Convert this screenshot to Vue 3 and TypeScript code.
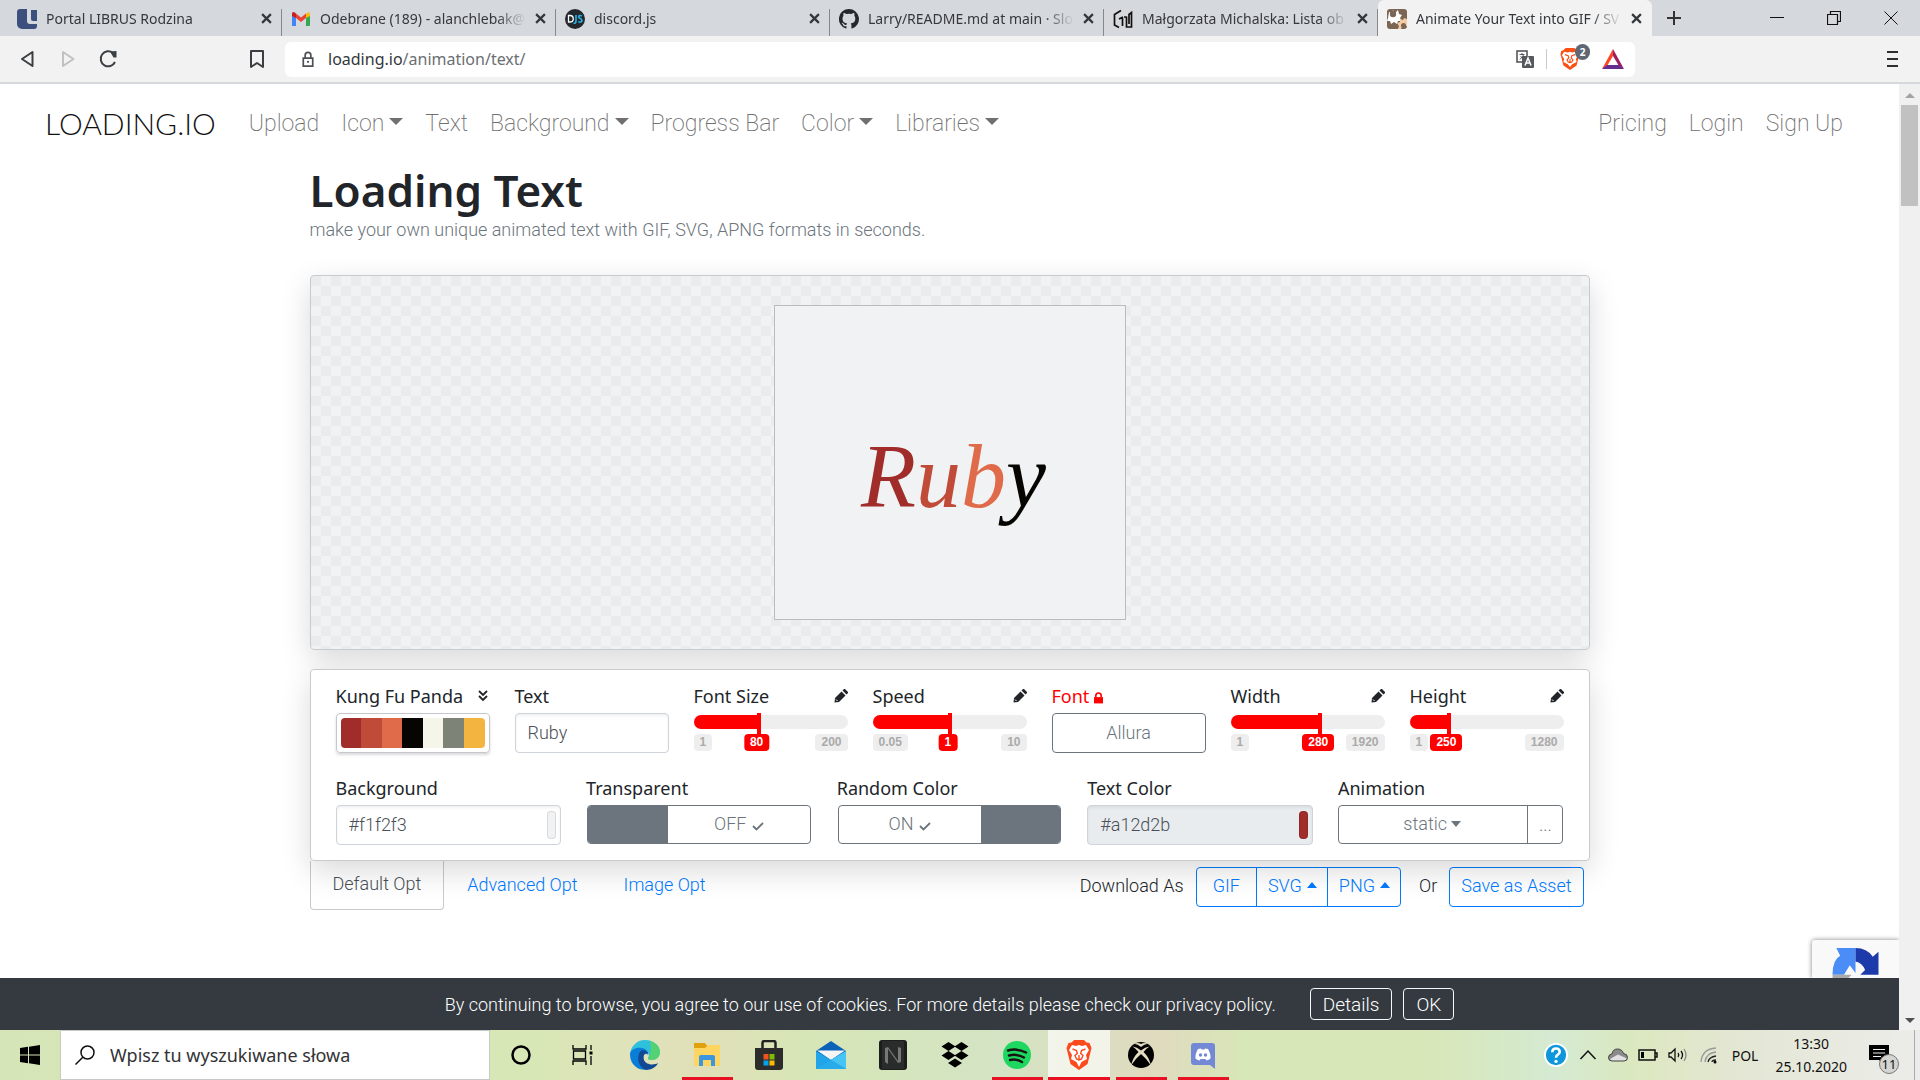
<script setup lang="ts">
import { ref } from 'vue'

interface Tab { icon: string; title: string; active?: boolean }
const tabs: Tab[] = [
  { icon: 'librus', title: 'Portal LIBRUS Rodzina' },
  { icon: 'gmail', title: 'Odebrane (189) - alanchlebak@' },
  { icon: 'djs', title: 'discord.js' },
  { icon: 'github', title: 'Larry/README.md at main · Slo' },
  { icon: 'sketch', title: 'Małgorzata Michalska: Lista ob' },
  { icon: 'gears', title: 'Animate Your Text into GIF / SV', active: true },
]

const navLinks = [
  { label: 'Upload', menu: false },
  { label: 'Icon', menu: true },
  { label: 'Text', menu: false },
  { label: 'Background', menu: true },
  { label: 'Progress Bar', menu: false },
  { label: 'Color', menu: true },
  { label: 'Libraries', menu: true },
]
const accountLinks = ['Pricing', 'Login', 'Sign Up']

const palette = ['#a12d2b', '#c04b38', '#df6b4b', '#060501', '#f5f5e9', '#7e8377', '#f4b540']
const letters = [
  { ch: 'R', color: '#a12d2b' },
  { ch: 'u', color: '#c04b38' },
  { ch: 'b', color: '#df6b4b' },
  { ch: 'y', color: '#060501' },
]

interface Slider { id: string; label: string; min: string; max: string; value: string; pos: number }
const sizeSliders = ref<Slider[]>([
  { id: 'font-size', label: 'Font Size', min: '1', max: '200', value: '80', pos: 42 },
  { id: 'speed', label: 'Speed', min: '0.05', max: '10', value: '1', pos: 50 },
])
const boxSliders = ref<Slider[]>([
  { id: 'width', label: 'Width', min: '1', max: '1920', value: '280', pos: 58 },
  { id: 'height', label: 'Height', min: '1', max: '1280', value: '250', pos: 25 },
])

const text = ref('Ruby')
const background = ref('#f1f2f3')
const textColor = ref('#a12d2b')
const animation = ref('static')
const query = ref('')

const apps = [
  { name: 'cortana' }, { name: 'tasks' }, { name: 'edge' },
  { name: 'explorer', open: true }, { name: 'store' }, { name: 'mail' },
  { name: 'notion' }, { name: 'dropbox' }, { name: 'spotify', open: true },
  { name: 'brave', open: true, current: true }, { name: 'xbox', open: true },
  { name: 'discord', open: true },
]
</script>

<template>
  <div class="desktop">
    <header class="tabstrip">
      <div v-for="t in tabs" :key="t.icon" class="tab" :class="{ active: t.active }">
        <svg class="favicon" viewBox="0 0 20 20">
          <g v-if="t.icon === 'librus'">
            <path d="M3 0h7v12a3 3 0 0 0 3 3h7v2a3 3 0 0 1-3 3H5a5 5 0 0 1-5-5V3a3 3 0 0 1 3-3z" fill="#3d4f7d" />
            <path d="M14 1h6v11h-4a2 2 0 0 1-2-2z" fill="#3d4f7d" />
          </g>
          <g v-else-if="t.icon === 'gmail'">
            <path d="M1 17V5l4 3v9z" fill="#4285f4" />
            <path d="M15 17V8l4-3v11a1 1 0 0 1-1 1z" fill="#34a853" />
            <path d="M15 9V5l1.600-1.300Q19 2.500 19 5.500V7z" fill="#fbbc04" />
            <path d="M5 9V4.500l5 4 5-4V9l-5 4z" fill="#ea4335" />
            <path d="M1 7V5q0-3 3-1.500L5 4.500V9z" fill="#c5221f" />
          </g>
          <g v-else-if="t.icon === 'djs'">
            <circle cx="10" cy="10" r="10" fill="#23272e" />
            <path d="M3.500 6.500h1.500a3 3 0 0 1 0 6.500H3.500z" fill="none" stroke="#fff" stroke-width="1.300" />
            <path d="M11 6v6q0 2.500-2.500 2.200M17 7q-3.300-1.200-3.300.7 0 1.300 1.500 1.800T17 11.700q-.5 2-3.700 1" fill="none" stroke="#27b5e8" stroke-width="1.600" />
          </g>
          <path v-else-if="t.icon === 'github'" fill="#24292e" d="M10 0a10 10 0 0 0-3.200 19.500c.5.100.7-.2.700-.5v-1.800c-2.800.6-3.400-1.300-3.400-1.300-.4-1.200-1.100-1.500-1.100-1.500-.9-.6.100-.6.100-.6 1 .1 1.500 1 1.500 1 .9 1.600 2.400 1.100 2.900.9.100-.7.400-1.100.6-1.400-2.200-.2-4.600-1.100-4.600-4.900 0-1.100.4-2 1-2.700-.1-.2-.4-1.300.1-2.600 0 0 .9-.3 2.800 1a9.500 9.500 0 0 1 5 0c1.900-1.300 2.800-1 2.800-1 .5 1.300.2 2.400.1 2.600.6.7 1 1.600 1 2.700 0 3.800-2.300 4.700-4.600 4.900.4.300.7.900.7 1.900V19c0 .3.200.6.700.5A10 10 0 0 0 10 0z" />
          <path v-else-if="t.icon === 'sketch'" d="M8 1.500 1.500 5.500V16L6 18.500M9.500 17V9M6 10l4-2M13.500 7.500V18h5V3.500l-2.500 2V15M11 8h2.500" fill="none" stroke="#111" stroke-width="1.700" />
          <g v-else>
            <rect width="20" height="20" rx="3" fill="#7b6553" />
            <path d="M2 3l3 1 1-3 2 3 3-3 1 4 3 1-2 3 2 3-4 0-1 3-3-2-3 2-1-3-3 0 1-3z" fill="#fff" />
            <circle cx="6" cy="5" r="3.200" fill="#7b6553" />
            <path d="M20 10l-3-1-1 2-3-1 0 3-3 1 2 3-1 3h3l1-2 2-1h3z" fill="#f4cba4" />
            <circle cx="16.500" cy="16.500" r="2.500" fill="#7b6553" />
          </g>
        </svg>
        <span class="tab-title">{{ t.title }}</span>
        <button class="tab-close" aria-label="Close tab">
          <svg viewBox="0 0 10 10"><path d="M1 1l8 8M9 1l-8 8" stroke="#33383d" stroke-width="2" /></svg>
        </button>
      </div>
      <button class="new-tab" aria-label="New tab">
        <svg viewBox="0 0 16 16"><path d="M8 1v14M1 8h14" stroke="#333" stroke-width="2" /></svg>
      </button>
      <div class="window-buttons">
        <button aria-label="Minimize"><svg viewBox="0 0 14 14"><path d="M0 6.500h14" stroke="#111" /></svg></button>
        <button aria-label="Restore"><svg viewBox="0 0 14 14"><path d="M.5 3.500h10v10H.5zM3.500 3V.5h10v10H11" fill="none" stroke="#111" stroke-width="1.200" /></svg></button>
        <button aria-label="Close"><svg viewBox="0 0 14 14"><path d="M.5.5l13 13M13.500.5l-13 13" stroke="#111" /></svg></button>
      </div>
    </header>

    <div class="toolbar">
      <button class="tool" aria-label="Back"><svg viewBox="0 0 20 20"><path d="M14.500 3v14L4 10z" fill="none" stroke="#3b3e42" stroke-width="2" stroke-linejoin="round" /></svg></button>
      <button class="tool" aria-label="Forward"><svg viewBox="0 0 20 20"><path d="M5 3v14L15.500 10z" fill="none" stroke="#bfc1c3" stroke-width="2" stroke-linejoin="round" /></svg></button>
      <button class="tool" aria-label="Reload"><svg viewBox="0 0 20 20"><path d="M17 13a7.500 7.500 0 1 1-2-9" fill="none" stroke="#3b3e42" stroke-width="2" /><path d="M12 2.500l6.500-.5v6.500h-3z" fill="#3b3e42" /></svg></button>
      <button class="tool bookmark" aria-label="Bookmark"><svg viewBox="0 0 20 20"><path d="M4 2h12v16l-6-4-6 4z" fill="none" stroke="#3b3e42" stroke-width="2" stroke-linejoin="round" /></svg></button>
      <div class="address">
        <svg class="lock" viewBox="0 0 14 18"><path d="M2 7.500h10v8.500H2zM4 7V4.500a3 3 0 0 1 6 0V7" fill="none" stroke="#4d5156" stroke-width="1.800" /><circle cx="7" cy="11.500" r="1.200" fill="#4d5156" /></svg>
        <p class="url">loading.io<span>/animation/text/</span></p>
        <svg class="translate" viewBox="0 0 18 18"><rect x="1" y="1" width="10" height="11" fill="#fff" stroke="#55585c" stroke-width="1.600" /><path d="M3.500 4.500h5M6 3v1.500M4 9.500l3.500-4.500M4.500 6.500l4 3" stroke="#55585c" fill="none" /><rect x="6" y="6" width="12" height="12" rx="1" fill="#55585c" /><path d="M9 15.500l3-7.500 3 7.500M10 13h4" stroke="#fff" stroke-width="1.500" fill="none" /></svg>
        <i class="rule"></i>
        <span class="shield">
          <svg viewBox="0 0 30 32"><path d="M9 1h12l3 3 3 1 1 5-1 3-3 12-9 6-9-6L3 13 2 10l1-5 3-1z" fill="#fb4f14" /><path d="M7 6l5 1 3-1 3 1 5-1 3 5-3 5 1 4-6 3-3 4-3-4-6-3 1-4-3-5z" fill="#fff" /><path d="M8 10l4.500 1.500.8 3-2.300 2.500 1.500 3 2.500 1 2.500-1 1.500-3-2.300-2.500.8-3L22 10M15 16v4" fill="none" stroke="#fb4f14" stroke-width="1.600" /></svg>
          <b>2</b>
        </span>
        <svg class="bat" viewBox="0 0 22 20"><path d="M11 0L0 20l5-3 6-10z" fill="#ff4724" /><path d="M11 0l11 20-5-3-6-10z" fill="#9e1f63" /><path d="M0 20h22l-5-4H5z" fill="#662d91" /></svg>
      </div>
      <button class="tool menu" aria-label="Menu"><svg viewBox="0 0 20 20"><path d="M5 3h11M5 10h11M5 17h11" stroke="#2d3033" stroke-width="1.800" /></svg></button>
    </div>

    <div class="viewport">
      <div class="page">
        <nav class="navbar">
          <a class="brand" href="#">LOADING.IO</a>
          <a v-for="l in navLinks" :key="l.label" class="nav-link" href="#">{{ l.label }}<i v-if="l.menu" class="caret"></i></a>
          <div class="account">
            <a v-for="l in accountLinks" :key="l" class="nav-link" href="#">{{ l }}</a>
          </div>
        </nav>

        <main class="container">
          <h1>Loading Text</h1>
          <p class="lead">make your own unique animated text with GIF, SVG, APNG formats in seconds.</p>

          <section class="preview">
            <div class="canvas">
              <p class="word"><span v-for="l in letters" :key="l.ch" :style="{ color: l.color }">{{ l.ch }}</span></p>
            </div>
          </section>

          <section class="options">
            <div class="fields">
              <div class="field">
                <div class="label"><span>Kung Fu Panda</span>
                  <svg class="chev" viewBox="0 0 12 12"><path d="M2 1l4 4 4-4M2 6l4 4 4-4" fill="none" stroke="#212529" stroke-width="1.800" /></svg>
                </div>
                <button class="palette" aria-label="Palette"><i v-for="c in palette" :key="c" :style="{ background: c }"></i></button>
              </div>
              <div class="field">
                <label class="label" for="text">Text</label>
                <input id="text" v-model="text" class="control" type="text" />
              </div>
              <div v-for="s in sizeSliders" :key="s.id" class="field">
                <div class="label"><label :for="s.id">{{ s.label }}</label>
                  <svg class="pencil" viewBox="0 0 14 14"><path d="M1 9L7.500 2.500l4 4L5 13l-4.500.5zM8.500 1.500L10 0h1l3 3v1l-1.500 1.500z" fill="#212529" /><path d="M2 10.500l1.500 1.500" stroke="#fff" /></svg>
                </div>
                <input :id="s.id" v-model="s.pos" class="range" type="range" min="0" max="100" :style="{ '--pos': s.pos + '%' }" />
                <div class="scale"><span>{{ s.min }}</span><span>{{ s.max }}</span><output :style="{ left: s.pos - 1 + '%' }">{{ s.value }}</output></div>
              </div>
              <div class="field">
                <div class="label locked"><span>Font</span>
                  <svg class="padlock" viewBox="0 0 10 12"><path d="M0 5h10v7H0z" fill="red" /><path d="M2 5V3.500a3 3 0 0 1 6 0V5" fill="none" stroke="red" stroke-width="1.800" /></svg>
                </div>
                <button class="btn grey">Allura</button>
              </div>
              <div v-for="s in boxSliders" :key="s.id" class="field">
                <div class="label"><label :for="s.id">{{ s.label }}</label>
                  <svg class="pencil" viewBox="0 0 14 14"><path d="M1 9L7.500 2.500l4 4L5 13l-4.500.5zM8.500 1.500L10 0h1l3 3v1l-1.500 1.500z" fill="#212529" /><path d="M2 10.500l1.500 1.500" stroke="#fff" /></svg>
                </div>
                <input :id="s.id" v-model="s.pos" class="range" type="range" min="0" max="100" :style="{ '--pos': s.pos + '%' }" />
                <div class="scale"><span>{{ s.min }}</span><span>{{ s.max }}</span><output :style="{ left: s.pos - 1 + '%' }">{{ s.value }}</output></div>
              </div>
            </div>

            <div class="fields">
              <div class="field">
                <label class="label" for="background">Background</label>
                <div class="color-box"><input id="background" v-model="background" class="control" type="text" /><i :style="{ background }"></i></div>
              </div>
              <div class="field">
                <div class="label">Transparent</div>
                <button class="toggle" aria-pressed="false"><i></i><span>OFF <svg viewBox="0 0 12 10"><path d="M1 5l3.500 3.500L11 2" fill="none" stroke="#6c757d" stroke-width="1.800" /></svg></span></button>
              </div>
              <div class="field">
                <div class="label">Random Color</div>
                <button class="toggle" aria-pressed="true"><span>ON <svg viewBox="0 0 12 10"><path d="M1 5l3.500 3.500L11 2" fill="none" stroke="#6c757d" stroke-width="1.800" /></svg></span><i></i></button>
              </div>
              <div class="field">
                <label class="label" for="text-color">Text Color</label>
                <div class="color-box"><input id="text-color" v-model="textColor" class="control muted" type="text" readonly /><i :style="{ background: textColor }"></i></div>
              </div>
              <div class="field">
                <label class="label" for="animation">Animation</label>
                <div class="group">
                  <div class="select"><select id="animation" v-model="animation"><option>static</option></select><i class="caret"></i></div>
                  <button class="more">...</button>
                </div>
              </div>
            </div>
          </section>

          <div class="actions">
            <a class="opt current" href="#">Default Opt</a>
            <a class="opt" href="#">Advanced Opt</a>
            <a class="opt" href="#">Image Opt</a>
            <div class="download">
              <span>Download As</span>
              <div class="btn-group">
                <button class="btn blue">GIF</button>
                <button class="btn blue">SVG<i class="caret up"></i></button>
                <button class="btn blue">PNG<i class="caret up"></i></button>
              </div>
              <span class="or">Or</span>
              <button class="btn blue">Save as Asset</button>
            </div>
          </div>
        </main>

        <footer class="cookies">
          <div class="recaptcha">
            <svg viewBox="0 0 48 48"><path d="M24 0v26l-6-8-6 10H0Q0 12 8 8L4 0z" fill="#4a8df6" /><path d="M24 0q12 0 18 9l6-5v24H29l5-5q-3-8-10-9z" fill="#1c3aa9" /><path d="M0 28h20l-7 7q2 3 5 4l-5 9Q0 44 0 28z" fill="#ababab" /></svg>
          </div>
          <p>By continuing to browse, you agree to our use of cookies. For more details please check our privacy policy.</p>
          <button>Details</button>
          <button>OK</button>
        </footer>
      </div>
      <div class="scrollbar"><i class="arrow up"></i><i class="thumb"></i><i class="arrow down"></i></div>
    </div>

    <footer class="taskbar">
      <button class="start" aria-label="Start"><svg viewBox="0 0 20 20"><path d="M0 3l8-1.200v7.700H0zM9 1.700L20 0v9.500H9zM0 10.500h8v7.700L0 17zM9 10.500h11V20L9 18.300z" /></svg></button>
      <label class="search">
        <svg viewBox="0 0 20 20"><circle cx="12.500" cy="7.500" r="6.500" fill="none" stroke="#111" stroke-width="1.500" /><path d="M8 12l-7.500 7.500" stroke="#111" stroke-width="1.500" /></svg>
        <input v-model="query" type="text" placeholder="Wpisz tu wyszukiwane słowa" />
      </label>
      <button v-for="a in apps" :key="a.name" class="app" :class="{ open: a.open, current: a.current }" :aria-label="a.name">
        <svg viewBox="0 0 30 30">
          <circle v-if="a.name === 'cortana'" cx="15" cy="15" r="8.500" fill="none" stroke="#000" stroke-width="2.500" />
          <g v-else-if="a.name === 'tasks'" fill="none" stroke="#000" stroke-width="1.300">
            <path d="M5 5v4h13V5M5 25v-4h13v4M5.500 11h12v8h-12zM23 5v5M23 16v9" /><path d="M21.500 11.500h3v3h-3z" fill="#000" stroke="none" />
          </g>
          <g v-else-if="a.name === 'edge'">
            <path d="M0 15A15 15 0 0 1 15 0c9 0 15 6 15 12 0 5-4 8-8 8-3 0-4.500-1-4-2 2-2 1-8-5-9C7 8 1 11 0 15z" fill="#2fc0dc" />
            <path d="M20 1c7 2 10 7 10 11 0 5-4 8-8 8-3 0-4.500-1-4-2 3-3 3-11 2-17z" fill="#5fd84f" opacity=".75" />
            <path d="M0 15c0-6 7-8 12-7 4 .7 6.500 3.500 6.500 6.500-6-2-9 2-8 7 1 4.500 5 7.500 9 7.500-8 3-19-2-19.500-14z" fill="#0a7dd8" />
            <path d="M12 10c-6 4-5 16 3 19.500 6 1 11-2 13-6.500-4 2.500-12 2-14-3-1-4 0-7 4-7-1-2-3-3-6-3z" fill="#114a93" />
          </g>
          <g v-else-if="a.name === 'explorer'">
            <path d="M2 3h11l3 4v6H2z" fill="#e0a010" /><path d="M2 8h11l3-3h12v21H2z" fill="#ffd561" />
            <path d="M7 26V17q0-2 2-2h12q2 0 2 2v9h-4v-6h-8v6z" fill="#3b96e0" />
          </g>
          <g v-else-if="a.name === 'store'">
            <path d="M8.500 9V3q0-2 2-2h9q2 0 2 2v6" fill="none" stroke="#222" stroke-width="2.500" /><path d="M1 8h28v19q0 3-3 3H4q-3 0-3-3z" fill="#2c2c2c" />
            <path d="M9.500 14h5v5.500h-5z" fill="#f25022" /><path d="M15.500 14h5v5.500h-5z" fill="#7fba00" /><path d="M9.500 20.500h5v5h-5z" fill="#00a4ef" /><path d="M15.500 20.500h5v5h-5z" fill="#ffb900" />
          </g>
          <g v-else-if="a.name === 'mail'">
            <path d="M0 11L15 1l15 10v18H0z" fill="#0a63b8" /><path d="M1 10.500h28L15 20z" fill="#f5f5f5" /><path d="M0 11l15 9 15-9v18H0z" fill="#22a4e8" /><path d="M30 11L15 20l15 9z" fill="#46c4f4" /><path d="M15 20l15 9H0z" fill="#28abea" />
          </g>
          <g v-else-if="a.name === 'notion'">
            <rect x="1" width="28" height="30" rx="3" fill="#1c1d1d" /><path d="M4 1h22v28H4z" fill="#2a2b2b" /><path d="M7 22V8l3-1 10 14V7l3 1v14l-3 1L10 9v15" fill="#777" />
          </g>
          <path v-else-if="a.name === 'dropbox'" d="M8.500 2l7 4.500-7 4.500-7-4.500zM21.500 2l7 4.500-7 4.500-7-4.500zM8.500 11l7 4.500-7 4.500-7-4.500zM21.500 11l7 4.500-7 4.500-7-4.500zM15 18.500l7 4.500-7 4.500L8 23z" />
          <g v-else-if="a.name === 'spotify'">
            <circle cx="15" cy="15" r="14" fill="#1ed760" /><path d="M6 10.500q9-2.500 18 2M7 15.500q8-2 15 2M8 20q6-1.500 12 2" fill="none" stroke="#191414" stroke-width="2.500" stroke-linecap="round" />
          </g>
          <g v-else-if="a.name === 'brave'">
            <path d="M10 0h10l2.500 2.500 3 .5 2 5-1 4-3 12-8.500 6-8.500-6-3-12-1-4 2-5 3-.5z" fill="#fb4a1b" /><path d="M8 5l4 1 3-1 3 1 4-1 3 5-3 5 1 4-5.500 3L15 27l-2.500-5L7 19l1-4-3-5z" fill="#fff" /><path d="M8.500 9l4 1.500.8 3-2.300 2 1.500 3.500 2.500 1 2.500-1 1.500-3.500-2.300-2 .8-3 4-1.500M15 15v4" fill="none" stroke="#fb4a1b" stroke-width="1.400" />
          </g>
          <g v-else-if="a.name === 'xbox'">
            <circle cx="15" cy="15" r="13" /><path d="M8 4q3-.5 7 3 4-3.500 7-3-3.500-2-7 0-3.500-2-7 0zM5 25.500Q7 17 12.500 12 9 8 6.500 6.500 11 7 15 10.500q4-3.500 8.500-4Q21 8 17.500 12 23 17 25 25.500q-4-6.500-10-11.500-6 5-10 11.500z" fill="#e5dcc4" />
          </g>
          <g v-else>
            <path d="M6 3h18q3 0 3 3v23l-5-4H6q-3 0-3-3V6q0-3 3-3z" fill="#7389d6" /><path d="M10 9l3-.6.600 1.200h2.800L17 8.400l3 .6q3 5 2.500 9.500-1.500 1.500-4 2l-1-1.500h-5l-1 1.500q-2.500-.5-4-2Q7 14 10 9z" fill="#fff" /><circle cx="12.500" cy="15" r="1.700" fill="#7389d6" /><circle cx="17.500" cy="15" r="1.700" fill="#7389d6" />
          </g>
        </svg>
      </button>
      <div class="tray">
        <svg class="help" viewBox="0 0 26 26"><circle cx="13" cy="13" r="12" fill="#0d96dc" stroke="#fff" stroke-width="2" /><path d="M9 10q0-4 4-4t4 3.500q0 2-2 3t-2 3.500" fill="none" stroke="#fff" stroke-width="2.800" /><circle cx="13" cy="20" r="1.800" fill="#fff" /></svg>
        <svg viewBox="0 0 20 20"><path d="M2.500 14L10 6l7.500 8" fill="none" stroke="#111" stroke-width="1.500" /></svg>
        <svg viewBox="0 0 20 20"><path d="M4 16q-3.500 0-3.500-3.500 0-3 3.500-3.700Q5 4 9.500 4 14 4 15.500 8.500q4 .5 4 4T16 16z" fill="#8b8b8b" /><path d="M2 14l8-4.500 9 4Q18 16 16 16H4q-1 0-2-2z" fill="#e2e2e2" /><path d="M4 16q-3.500 0-3.500-3.500 0-3 3.500-3.700Q5 4 9.500 4 14 4 15.500 8.500q4 .5 4 4T16 16z" fill="none" stroke="#444" /></svg>
        <svg viewBox="0 0 20 20"><path d="M1 5h16v10H1zM17 8h2v4h-2" fill="none" stroke="#111" stroke-width="1.500" /><path d="M3 7h3v6H3z" /></svg>
        <svg viewBox="0 0 20 20"><path d="M1 8h2l4-4v12l-4-4H1z" fill="none" stroke="#111" stroke-width="1.300" /><path d="M10 8q1.500 2 0 4M13 6q3 4 0 8" fill="none" stroke="#111" stroke-width="1.300" /><path d="M16 4q4 6 0 12" fill="none" stroke="#888" stroke-width="1.300" /></svg>
        <svg viewBox="0 0 20 20"><path d="M3 17Q4 4 18 3M7 17Q8 8 18 7" fill="none" stroke="#999" stroke-width="1.300" /><path d="M10 17q1-5 8-6M14 17q0-2 4-2" fill="none" stroke="#222" stroke-width="1.300" /><circle cx="17" cy="17" r="1.500" /></svg>
        <span class="lang">POL</span>
        <p class="clock"><span>13:30</span><span>25.10.2020</span></p>
        <span class="notes"><svg viewBox="0 0 20 20"><path d="M0 0h20v15h-5v5l-5-5H0z" /><path d="M4 4.500h12M4 8h12M4 11.500h8" stroke="#eee" stroke-width="1.200" /></svg><b>11</b></span>
        <i class="peek"></i>
      </div>
    </footer>
  </div>
</template>

<style>
body { margin: 0; }
</style>

<style scoped>
* { box-sizing: border-box; }
p, h1 { margin: 0; }
button { margin: 0; padding: 0; border: 0; background: none; font: inherit; color: inherit; }
a { color: inherit; text-decoration: none; }
svg { display: block; flex: none; }
.desktop { display: flex; flex-direction: column; min-height: 100vh; background: #fff; font-family: "Noto Sans", "Open Sans", sans-serif; }

.tabstrip { display: flex; height: 36px; padding-left: 8px; background: #d5d8dc; color: #35383c; font-size: 14px; }
.tab { display: flex; align-items: center; flex: 0 1 274px; min-width: 0; padding: 1px 10px 0 9px; gap: 9px; background: linear-gradient(#85898d, #85898d) right bottom / 1px 27px no-repeat; }
.tab.active { background: #f2f2f2; border-radius: 6px 6px 0 0; }
.favicon { width: 20px; height: 20px; }
.tab-title { flex: 1; min-width: 0; overflow: hidden; white-space: nowrap; mask-image: linear-gradient(to right, #000 calc(100% - 30px), transparent); }
.tab-close { width: 11px; height: 11px; }
.new-tab { width: 16px; margin-left: 14px; }
.new-tab svg { width: 16px; }
.window-buttons { display: flex; align-items: center; gap: 43px; margin-left: auto; padding-right: 22px; }
.window-buttons svg { width: 14px; height: 14px; }

.toolbar { display: flex; align-items: center; height: 48px; padding: 0 18px; background: #f2f2f2; border-bottom: 2px solid #d5d8dc; }
.tool { width: 20px; margin-right: 20px; }
.tool svg { width: 20px; height: 20px; }
.bookmark { margin-left: 109px; margin-right: 18px; }
.address { display: flex; align-items: center; flex: 0 1 1350px; height: 35px; padding: 0 11px 0 16px; background: #fff; border-radius: 6px; }
.lock { width: 14px; height: 17px; }
.url { margin: 0 auto 0 13px; font-size: 16px; color: #33373b; }
.url span { color: #6b6f74; }
.translate { width: 18px; height: 18px; }
.rule { width: 1px; height: 20px; margin: 0 12px; background: #c8cacc; }
.shield { position: relative; margin-right: 21px; }
.shield svg { width: 22px; height: 24px; }
.shield b { position: absolute; left: 16px; top: -3px; width: 15px; height: 16px; border-radius: 8px; background: #5f6775; color: #fff; font-size: 10px; line-height: 16px; text-align: center; }
.bat { width: 22px; height: 20px; }
.menu { margin: 0 0 0 auto; }

.viewport { display: flex; flex: 1; }
.page { display: flex; flex-direction: column; flex: 1; min-width: 0; font-family: Roboto, sans-serif; font-weight: 300; }
.scrollbar { display: flex; flex-direction: column; align-items: center; width: 21px; background: #f0f0f0; }
.thumb { width: 17px; height: 101px; background: #c1c1c1; margin-top: 7px; }
.arrow { border: 5px solid transparent; }
.arrow.up { border-bottom-color: #a3a3a3; margin-top: 4px; }
.arrow.down { border-top-color: #505050; margin: auto 0 2px; }

.navbar { display: flex; align-items: center; height: 78px; padding: 0 56px 0 45px; gap: 22px; }
.brand { font-family: Lato, sans-serif; font-weight: 300; font-size: 30px; line-height: 32px; color: #111; margin-right: 11px; }
.nav-link { font-size: 23px; font-weight: 200; color: #707070; white-space: nowrap; }
.account { display: flex; gap: 22px; margin-left: auto; }
.caret { display: inline-block; margin-left: 5px; vertical-align: 6px; border: 7px solid transparent; border-top-color: currentColor; border-bottom: 0; }
.caret.up { border-top: 0; border-bottom: 6px solid currentColor; }

.container { flex: 1; width: 100%; max-width: 1280px; margin: 0 auto; }
h1 { font-family: "Noto Sans", sans-serif; font-weight: 600; font-size: 44px; line-height: 56px; color: #212529; }
.lead { font-size: 18px; line-height: 24px; color: #6c757d; }
.preview { display: flex; justify-content: center; margin-top: 33px; padding: 29px; border: 1px solid #c8cbce; border-radius: 4px; box-shadow: 0 10px 30px rgba(0, 0, 0, .15); background: conic-gradient(#f1f2f3 25%, #eaebec 0 50%, #f1f2f3 0 75%, #eaebec 0) 0 0 / 20px 20px; }
.canvas { display: flex; justify-content: center; align-items: center; width: 352px; height: 315px; padding: 28px 0 0 8px; border: 1px solid #babcbe; background: #f1f2f3; }
.word { font: italic 400 90px/1 "Liberation Serif", serif; }

.options { position: relative; display: flex; flex-direction: column; gap: 22px; margin-top: 19px; padding: 13px 25px 15px; background: #fff; border: 1px solid #c8cbce; border-radius: 4px; box-shadow: 0 10px 30px rgba(0, 0, 0, .15); }
.fields { display: flex; gap: 25px; }
.field { flex: 1 1 0; min-width: 0; }
.label { display: flex; align-items: center; justify-content: space-between; height: 25px; margin-bottom: 5px; font-family: "Noto Sans", sans-serif; font-weight: 400; font-size: 18px; color: #212529; white-space: nowrap; }
.label.locked { justify-content: flex-start; gap: 5px; color: red; }
.chev { width: 14px; height: 12px; }
.pencil { width: 14px; height: 14px; }
.padlock { width: 9px; height: 12px; margin-top: 4px; }
.palette { display: flex; width: 100%; height: 40px; padding: 4px; border: 1px solid #c4c8cc; border-radius: 4px; box-shadow: 0 2px 3px rgba(0, 0, 0, .15); overflow: hidden; }
.palette i { flex: 1; height: 30px; }
.palette i:first-child { border-radius: 4px 0 0 4px; }
.palette i:last-child { border-radius: 0 4px 4px 0; }
.control { display: block; width: 100%; height: 40px; padding: 0 12px 2px; border: 1px solid #ced4da; border-radius: 4px; box-shadow: inset 0 2px 3px rgba(0, 0, 0, .06); background: #fff; color: #495057; font: 300 18px Roboto, sans-serif; outline: 0; }
.control.muted { background: #e9ecef; }
.color-box { position: relative; }
.color-box i { position: absolute; right: 5px; top: 6px; width: 9px; height: 28px; border: 1px solid rgba(0, 0, 0, .1); border-radius: 4px; }
.btn { height: 40px; padding: 0 11px 2px; border: 1px solid; border-radius: 4px; font-size: 18px; white-space: nowrap; }
.btn.grey { width: 100%; color: #6c757d; }
.btn.blue { color: #007bff; }
.range { appearance: none; display: block; width: 100%; height: 14px; margin: 7px 0 5px; border-radius: 7px; background: linear-gradient(to right, red var(--pos), #eee 0); }
.range::-webkit-slider-runnable-track { height: 14px; }
.range::-webkit-slider-thumb { appearance: none; width: 4px; height: 21px; margin-top: -2px; background: red; }
.scale { position: relative; display: flex; justify-content: space-between; font: bold 12px/17px "Liberation Sans", sans-serif; }
.scale span { padding: 0 6px; border-radius: 4px; background: #eee; color: #aaa; }
.scale output { position: absolute; top: 0; transform: translateX(-50%); padding: 0 6px; border-radius: 4px; background: red; color: #fff; }
.toggle { display: flex; width: calc(100% - 2px); height: 39px; margin: 0 auto; border: 1px solid #6c757d; border-radius: 4px; overflow: hidden; color: #6c757d; font-size: 18px; }
.toggle i { flex: 0 0 36%; height: 100%; background: #6c757d; }
.toggle span { display: flex; align-items: center; justify-content: center; flex: 1; height: 100%; padding-bottom: 2px; gap: 5px; }
.toggle svg { width: 12px; height: 10px; margin-top: 4px; }
.group { display: flex; height: 39px; border: 1px solid #6c757d; border-radius: 4px; color: #6c757d; font-size: 18px; }
.select { position: relative; flex: 1; }
.select select { appearance: none; width: 100%; height: 100%; padding: 0 16px 2px 0; border: 0; background: none; color: inherit; font: inherit; text-align: center; text-align-last: center; outline: 0; }
.select .caret { position: absolute; left: calc(50% + 13px); top: 15px; border-width: 6px 5px 0; }
.more { width: 35px; border-left: 1px solid #6c757d; }

.actions { display: flex; align-items: flex-start; padding-right: 6px; font-size: 18px; }
.opt { padding: 0 22px; border: 1px solid transparent; height: 49px; line-height: 45px; color: #007bff; white-space: nowrap; }
.opt.current { color: #495057; border-color: #c8cbce; border-top: 0; border-radius: 0 0 4px 4px; }
.download { display: flex; align-items: center; margin: 6px 0 0 auto; color: #212529; line-height: 24px; }
.download > span { padding-bottom: 2px; }
.btn-group { display: flex; margin-left: 12px; }
.btn-group .btn { border-radius: 0; }
.btn-group .btn + .btn { margin-left: -1px; padding: 0 10px 2px 11px; }
.btn-group .btn:first-child { padding: 0 16px 2px; border-radius: 4px 0 0 4px; }
.btn-group .btn:last-child { border-radius: 0 4px 4px 0; }
.or { margin: 0 12px 0 18px; }
.download .caret { border-width: 0 5px 6px; vertical-align: 4px; }

.cookies { position: relative; display: flex; align-items: center; justify-content: center; height: 52px; background: #343a40; color: #fff; font-size: 18px; }
.cookies p { margin-right: 34px; }
.cookies button { height: 32px; padding: 0 12px; margin-right: 11px; border: 1px solid #f8f9fa; border-radius: 4px; font-size: 19px; }
.cookies button:last-child { margin-right: 0; }
.recaptcha { position: absolute; right: 0; bottom: 52px; width: 87px; height: 38px; padding: 8px 20px 0; overflow: hidden; background: #f9f9f9; border-radius: 3px 0 0 0; box-shadow: 0 0 5px #808080; clip-path: inset(-6px 0 0 -6px); }
.recaptcha svg { width: 47px; height: 46px; }

.taskbar { display: flex; height: 50px; background: linear-gradient(to right, #d5e5b7 0, #d8e7b6 28%, #e0e2ba 33%, #e0e0b8 37%, #d6e6b6 42%, #d4e4c4 52%, #e0dabf 60%, #d7e7b7 65%, #d8e7b7 74%, #d4ead2 81%, #dbe8bf 85%, #e3e6d2 90%, #ececea 100%); }
.start { width: 60px; padding-left: 20px; }
.start svg { width: 20px; height: 20px; }
.search { display: flex; align-items: center; flex: 0 1 430px; height: 50px; padding-left: 14px; background: #fff; border: 1px solid #c6c9c4; }
.search svg { width: 20px; height: 20px; }
.search input { flex: 1; min-width: 0; border: 0; padding: 0; margin-left: 15px; font: 18px "Noto Sans", sans-serif; outline: 0; }
.search input::placeholder { color: #333; opacity: 1; }
.app { display: flex; align-items: center; justify-content: center; flex: 0 1 62px; background: linear-gradient(#e81123, #e81123) center bottom / 0 3px no-repeat; }
.app.open { background-size: 51px 3px; }
.app.current { background-color: rgba(255, 255, 255, .65); background-size: 100% 3px; }
.app svg { width: 30px; height: 30px; }
.tray { display: flex; align-items: center; gap: 10px; margin-left: auto; font-size: 14px; color: #111; }
.tray svg { width: 20px; height: 20px; }
.tray .help { width: 24px; height: 26px; }
.lang { margin-left: 4px; }
.clock { display: flex; flex-direction: column; align-items: center; line-height: 23px; margin: 0 12px 0 7px; }
.notes { position: relative; margin-right: 15px; }
.notes b { position: absolute; left: 10px; top: 9px; width: 20px; height: 20px; border: 1px solid #777; border-radius: 50%; background: #d4d4d0; font-weight: 400; font-size: 13px; line-height: 18px; text-align: center; }
.peek { width: 6px; height: 50px; border-left: 1px solid #aaa; }
</style>
